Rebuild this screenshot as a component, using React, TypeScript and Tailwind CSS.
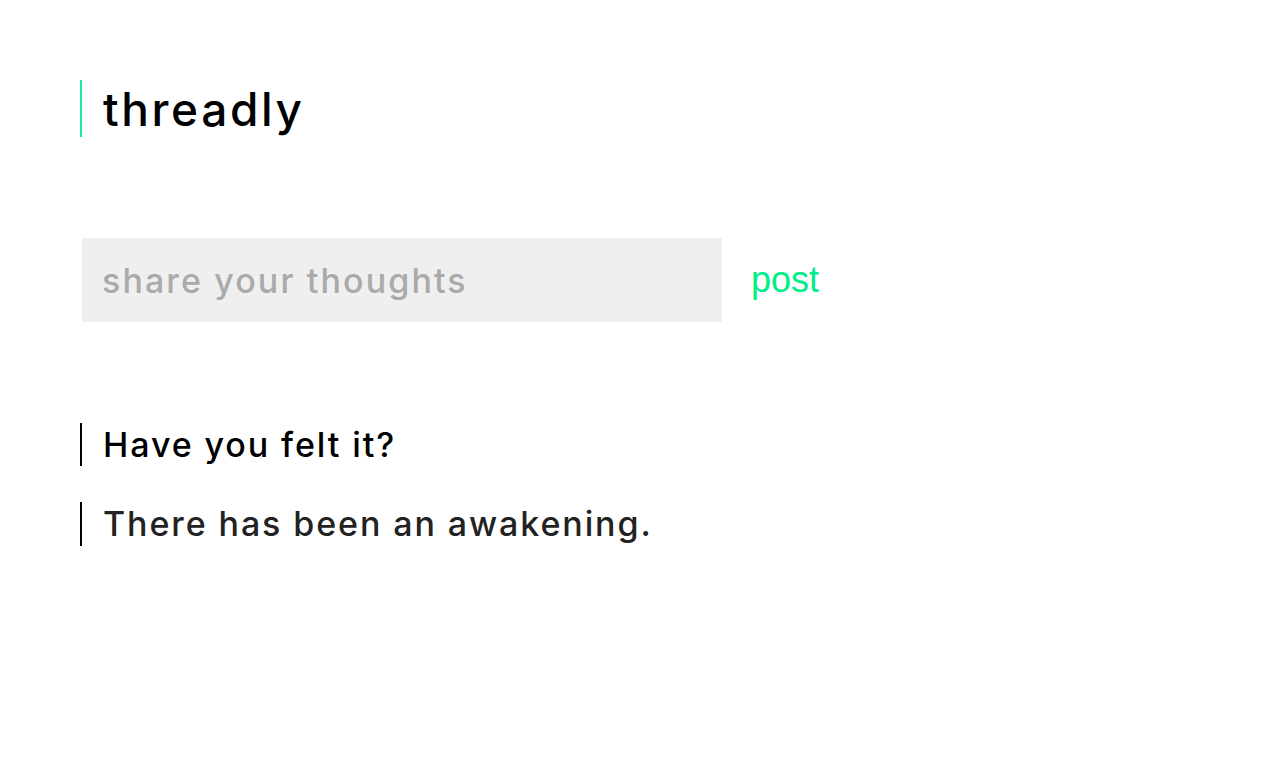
import React from "react";

export default function App() {
  return (
    <div className="min-h-screen bg-white pl-[80px] pt-[80px]" style={{ fontFamily: "Inter, 'Open Sans', sans-serif" }}>
      <div className="flex h-[57px] items-center border-l-2 border-[#1de9a0] pl-[21px]">
        <h1 className="text-[46px] leading-none font-medium tracking-[2.6px] text-black">threadly</h1>
      </div>
      <div className="mt-[101px] flex items-center">
        <input
          className="ml-[2px] h-[84px] w-[640px] bg-[#efefef] pl-[20px] text-[34px] font-medium tracking-[2.1px] text-black outline-none placeholder:text-[#aaaaaa]"
          placeholder="share your thoughts"
        />
        <button
          className="ml-[29px] text-[36px] text-[#00ee88]"
          style={{ fontFamily: "'Liberation Sans', Arial, sans-serif" }}
        >
          post
        </button>
      </div>
      <div className="mt-[101px] flex flex-col gap-[36px]">
        <div className="flex h-[43px] items-center border-l-2 border-black pl-[21px]">
          <p className="text-[34px] leading-none font-medium tracking-[1.9px] text-black">Have you felt it?</p>
        </div>
        <div className="flex h-[44px] items-center border-l-2 border-black pl-[21px]">
          <p className="text-[34px] leading-none font-medium tracking-[1.9px] text-[#222222]">There has been an awakening.</p>
        </div>
      </div>
    </div>
  );
}
